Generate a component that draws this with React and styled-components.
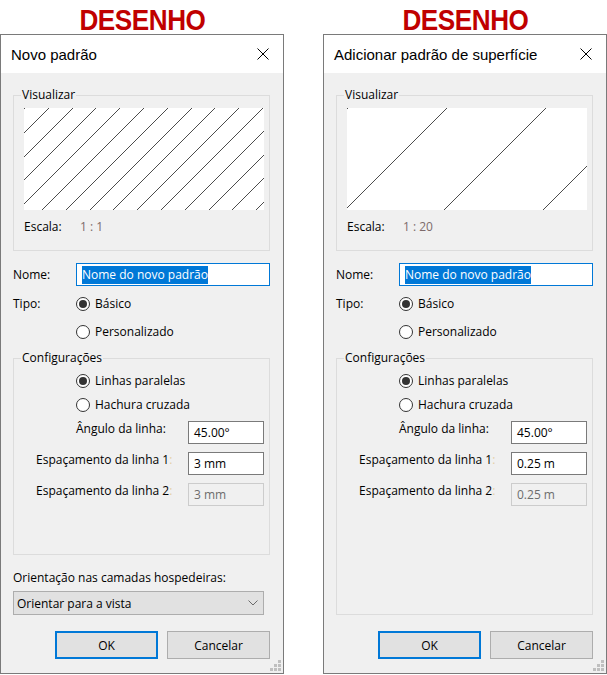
import styled, { createGlobalStyle } from "styled-components";

const GlobalStyle = createGlobalStyle`
  body {
    margin: 0;
    background: #ffffff;
  }
`;

const Hatch = ({ spacing, offset }) => {
  const w = 240;
  const h = 102;
  const lines = [];
  for (let x = offset - h; x < w; x += spacing) {
    lines.push(Math.round(x));
  }
  return (
    <svg width={w} height={h} viewBox={`0 0 ${w} ${h}`} shapeRendering="crispEdges">
      {lines.map((x) => (
        <line key={x} x1={x} y1={h} x2={x + h} y2={0} stroke="#000" strokeWidth="0.7" />
      ))}
    </svg>
  );
};

const CloseIcon = () => (
  <svg width="12" height="12" viewBox="0 0 12 12">
    <path d="M0.5 0.5 L11.5 11.5 M11.5 0.5 L0.5 11.5" stroke="#000" strokeWidth="1" fill="none" />
  </svg>
);

const Chevron = () => (
  <svg width="10" height="6" viewBox="0 0 10 6">
    <polyline points="0.5,0.5 5,5 9.5,0.5" stroke="#6a6a6a" strokeWidth="1" fill="none" />
  </svg>
);

const SizeGrip = () => (
  <Grip width="12" height="12" viewBox="0 0 12 12">
    {[
      [8, 0],
      [4, 4],
      [8, 4],
      [0, 8],
      [4, 8],
      [8, 8],
    ].map(([x, y]) => (
      <rect key={`${x}-${y}`} x={x} y={y} width="3" height="3" fill="#bfbfbf" />
    ))}
  </Grip>
);

const Radio = ({ checked, children }) => (
  <RadioItem>
    <RadioCircle $checked={checked} />
    {children}
  </RadioItem>
);

const PatternDialog = ({ title, scale, spacing, offset, lineSpacing, showOrientation }) => (
  <Column>
    <Heading>
      <HeadingText>DESENHO</HeadingText>
    </Heading>
    <Dialog>
      <TitleBar>
        <span>{title}</span>
        <CloseIcon />
      </TitleBar>
      <Body>
        <Group>
          <Legend>Visualizar</Legend>
          <PreviewInner>
            <Preview>
              <Hatch spacing={spacing} offset={offset} />
            </Preview>
            <ScaleRow>
              <ScaleLabel>Escala:</ScaleLabel>
              <ScaleValue>{scale}</ScaleValue>
            </ScaleRow>
          </PreviewInner>
        </Group>

        <NameRow>
          <span>Nome:</span>
          <TextBox $variant="focus">
            <Selected>Nome do novo padrão</Selected>
          </TextBox>
        </NameRow>

        <TypeRow>
          <TypeLabel>Tipo:</TypeLabel>
          <RadioList>
            <Radio checked>Básico</Radio>
            <Radio>Personalizado</Radio>
          </RadioList>
        </TypeRow>

        <SettingsGroup>
          <Legend>Configurações</Legend>
          <SettingsInner>
            <RadioList $indent={62} $gap={8}>
              <Radio checked>Linhas paralelas</Radio>
              <Radio>Hachura cruzada</Radio>
            </RadioList>
            <FieldGrid>
              <FieldLabel $indent={62}>Ângulo da linha:</FieldLabel>
              <TextBox>45.00°</TextBox>
              <FieldLabel $indent={22}>
                Espaçamento da linha 1<FaintColon>:</FaintColon>
              </FieldLabel>
              <TextBox>{lineSpacing}</TextBox>
              <FieldLabel $indent={22}>
                Espaçamento da linha 2<FaintColon>:</FaintColon>
              </FieldLabel>
              <TextBox $variant="disabled">{lineSpacing}</TextBox>
            </FieldGrid>
          </SettingsInner>
        </SettingsGroup>

        {showOrientation && (
          <>
            <OrientLabel>Orientação nas camadas hospedeiras:</OrientLabel>
            <Select>
              <span>Orientar para a vista</span>
              <Chevron />
            </Select>
          </>
        )}

        <Buttons>
          <Button $primary>OK</Button>
          <Button>Cancelar</Button>
        </Buttons>
      </Body>
      <SizeGrip />
    </Dialog>
  </Column>
);

const App = () => (
  <>
    <GlobalStyle />
    <Page>
      <PatternDialog
        title="Novo padrão"
        scale="1 : 1"
        spacing={23.8}
        offset={1}
        lineSpacing="3 mm"
        showOrientation
      />
      <PatternDialog
        title="Adicionar padrão de superfície"
        scale="1 : 20"
        spacing={99}
        offset={1}
        lineSpacing="0.25 m"
      />
    </Page>
  </>
);

const Page = styled.div`
  display: flex;
  gap: 39px;
  width: 607px;
  font-family: "Open Sans", "Liberation Sans", sans-serif;
  font-size: 12px;
  color: #000;
`;

const Column = styled.div`
  display: flex;
  flex-direction: column;
  width: 284px;
`;

const Heading = styled.div`
  height: 34px;
  box-sizing: border-box;
  padding-top: 5px;
  line-height: 29px;
  text-align: center;
  font-family: "Liberation Sans", sans-serif;
  font-weight: bold;
  font-size: 30px;
  color: #c00000;
`;

/* the heading face is a narrow bold, so the Arial-width glyphs get squeezed */
const HeadingText = styled.span`
  display: inline-block;
  transform: scaleX(0.87);
  letter-spacing: -0.5px;
`;

const Dialog = styled.div`
  position: relative;
  height: 640px;
  box-sizing: border-box;
  border: 1px solid #7a7a7a;
  background: #f0f0f0;
  display: flex;
  flex-direction: column;
`;

const TitleBar = styled.div`
  height: 38px;
  flex-shrink: 0;
  background: #ffffff;
  display: flex;
  align-items: center;
  justify-content: space-between;
  padding: 0 14px 0 10px;
  font-family: "Liberation Sans", sans-serif;
  font-size: 15px;
`;

const Body = styled.div`
  flex: 1;
  display: flex;
  flex-direction: column;
  padding: 15px 13px 14px 12px;
  min-height: 0;
`;

const Group = styled.fieldset`
  margin: 0;
  padding: 0;
  min-width: 0;
  border: 1px solid #dcdcdc;
`;

const SettingsGroup = styled(Group)`
  margin-top: 11px;
  flex: 1;
  min-height: 0;
`;

const Legend = styled.legend`
  margin-left: 7px;
  padding: 0 1px;
  line-height: 14px;
`;

const PreviewInner = styled.div`
  padding: 6px 5px 16px 10px;
`;

const Preview = styled.div`
  width: 240px;
  height: 102px;
  background: #ffffff;
  svg {
    display: block;
  }
`;

const ScaleRow = styled.div`
  display: flex;
  margin-top: 10px;
  line-height: 14px;
`;

const ScaleLabel = styled.span`
  width: 56px;
`;

const ScaleValue = styled.span`
  color: #7d6b6b;
`;

const NameRow = styled.div`
  display: grid;
  grid-template-columns: 63px 1fr;
  align-items: center;
  margin-top: 12px;
`;

const TextBox = styled.div`
  height: 23px;
  box-sizing: border-box;
  display: flex;
  align-items: center;
  padding: 0 5px;
  border: 1px solid
    ${({ $variant }) =>
      $variant === "focus" ? "#0078d7" : $variant === "disabled" ? "#cccccc" : "#7a7a7a"};
  background: ${({ $variant }) => ($variant === "disabled" ? "#f0f0f0" : "#ffffff")};
  color: ${({ $variant }) => ($variant === "disabled" ? "#6d6d6d" : "#000")};
  white-space: nowrap;
`;

const Selected = styled.span`
  background: #0078d7;
  color: #ffffff;
  line-height: 18px;
`;

const TypeRow = styled.div`
  display: grid;
  grid-template-columns: 63px 1fr;
  align-items: start;
  margin-top: 10px;
`;

const TypeLabel = styled.span`
  line-height: 16px;
`;

const RadioList = styled.div`
  display: flex;
  flex-direction: column;
  gap: ${({ $gap = 12 }) => $gap}px;
  padding-left: ${({ $indent = 0 }) => $indent}px;
`;

const RadioItem = styled.div`
  display: flex;
  align-items: center;
  gap: 5px;
  height: 16px;
  line-height: 16px;
`;

const RadioCircle = styled.span`
  position: relative;
  width: 14px;
  height: 14px;
  box-sizing: border-box;
  border: 1px solid #333333;
  border-radius: 50%;
  background: #ffffff;

  &::after {
    content: "";
    display: ${({ $checked }) => ($checked ? "block" : "none")};
    position: absolute;
    left: 2px;
    top: 2px;
    width: 8px;
    height: 8px;
    border-radius: 50%;
    background: #333333;
  }
`;

const SettingsInner = styled.div`
  padding: 8px 5px 0 0;
`;

const FieldGrid = styled.div`
  display: grid;
  grid-template-columns: 174px 76px;
  row-gap: 8px;
  margin-top: 8px;
`;

const FieldLabel = styled.span`
  padding-left: ${({ $indent }) => $indent}px;
  padding-top: 1px;
  line-height: 14px;
  white-space: nowrap;
`;

const FaintColon = styled.span`
  color: #e4cfa6;
`;

const OrientLabel = styled.div`
  margin-top: 16px;
  line-height: 14px;
`;

const Select = styled.div`
  margin-top: 6px;
  width: 251px;
  height: 24px;
  box-sizing: border-box;
  display: flex;
  align-items: center;
  justify-content: space-between;
  padding: 0 5px 0 3px;
  border: 1px solid #adadad;
  background: #e1e1e1;
`;

const Buttons = styled.div`
  display: flex;
  justify-content: flex-end;
  gap: 9px;
  margin-top: 16px;
`;

const Button = styled.div`
  width: 103px;
  height: 28px;
  box-sizing: border-box;
  display: flex;
  align-items: center;
  justify-content: center;
  background: #e1e1e1;
  border: ${({ $primary }) => ($primary ? "2px solid #0078d7" : "1px solid #adadad")};
`;

const Grip = styled.svg`
  position: absolute;
  right: 1px;
  bottom: 1px;
`;

export default App;
